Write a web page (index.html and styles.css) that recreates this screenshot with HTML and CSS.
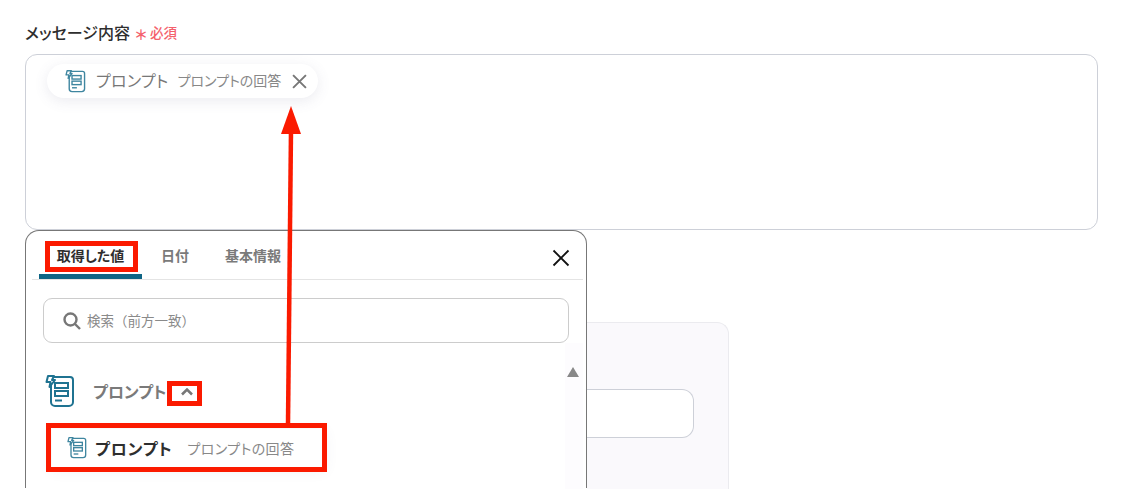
FILE: index.html
```html
<!DOCTYPE html>
<html lang="ja">
<head>
    <meta charset="UTF-8">
    <title>メッセージ内容</title>
    <link rel="stylesheet" href="styles.css">
</head>
<body>
    <svg class="icon-defs" width="0" height="0">
        <symbol id="prompt-icon" viewBox="0 0 30 33">
            <path d="M6 5 V27 a4 4 0 0 0 4 4 H24 a4 4 0 0 0 4-4 V5 a3 3 0 0 0-3-3 H7" fill="none" stroke-width="2"/>
            <rect x="10" y="8" width="13" height="5" fill="none" stroke-width="2"/>
            <rect x="10" y="16" width="13" height="5" fill="none" stroke-width="2"/>
            <path d="M10 25.5 H17" fill="none" stroke-width="2"/>
            <path d="M3 1 H9 L7 5 H10 L4.500 12 L5.500 7 H1.500 Z" fill="#fff" stroke-width="2" stroke-linejoin="round"/>
        </symbol>
    </svg>

    <div class="page">
        <div class="field-label">
            <span>メッセージ内容</span>
            <span class="required"><span class="asterisk">＊</span>必須</span>
        </div>

        <div class="message-box">
            <div class="chip">
                <svg class="chip-icon"><use href="#prompt-icon"/></svg>
                <span class="chip-name">プロンプト</span>
                <span class="chip-sub">プロンプトの回答</span>
                <svg class="chip-close" viewBox="0 0 14 14"><path d="M1 1 L13 13 M13 1 L1 13"/></svg>
            </div>
        </div>

        <div class="lower">
            <div class="panel">
                <div class="tabs">
                    <div class="tab active">取得した値</div>
                    <div class="tab tab-date">日付</div>
                    <div class="tab">基本情報</div>
                    <svg class="panel-close" viewBox="0 0 18 18"><path d="M1.5 1.5 L16.5 16.5 M16.5 1.5 L1.5 16.5"/></svg>
                </div>

                <div class="search">
                    <svg class="search-icon" viewBox="0 0 18 18"><circle cx="7.5" cy="7.5" r="6"/><path d="M12 12 L17 17"/></svg>
                    <span class="search-text">検索（前方一致）</span>
                </div>

                <div class="list-wrap">
                    <div class="list">
                        <div class="group-row">
                            <svg class="group-icon"><use href="#prompt-icon"/></svg>
                            <span class="group-name">プロンプト</span>
                            <svg class="chevron" viewBox="0 0 12 8"><path d="M1 6.5 L6 1.5 L11 6.5"/></svg>
                        </div>
                        <div class="item-row">
                            <svg class="item-icon"><use href="#prompt-icon"/></svg>
                            <span class="item-name">プロンプト</span>
                            <span class="item-sub">プロンプトの回答</span>
                        </div>
                    </div>
                    <div class="scrollbar">
                        <div class="scroll-up"></div>
                    </div>
                </div>
            </div>

            <div class="back-card">
                <div class="back-input"></div>
            </div>
        </div>
    </div>

    <!-- red annotations drawn over the screenshot -->
    <svg class="annotations" width="1128" height="489" viewBox="0 0 1128 489">
        <rect x="47.500" y="243.500" width="88" height="26" fill="none" stroke="#fb1a00" stroke-width="5"/>
        <rect x="169.500" y="383.500" width="30" height="20" fill="none" stroke="#fb1a00" stroke-width="5"/>
        <rect x="48.500" y="425.500" width="276" height="44" fill="none" stroke="#fb1a00" stroke-width="5"/>
        <path d="M288 424 L291 130" fill="none" stroke="#fb1a00" stroke-width="4.500"/>
        <path d="M291 106 L301 134 H281 Z" fill="#fb1a00"/>
    </svg>
</body>
</html>
```

FILE: styles.css
```css
* {
    box-sizing: border-box;
}
html, body {
    height: 489px;
    overflow: hidden;
}
body {
    margin: 0;
    background: #fff;
    font-family: "Noto Sans CJK JP", "Noto Sans", sans-serif;
    font-feature-settings: "palt";
    color: #333;
}
.icon-defs {
    display: block;
    height: 0;
}
.page {
    padding: 21px 30px 0 25px;
}
.field-label {
    display: flex;
    align-items: center;
    height: 22px;
    font-size: 16px;
    font-weight: 500;
    color: #2e2e2e;
}
.required {
    display: flex;
    align-items: center;
    margin-left: 4px;
    font-size: 13.500px;
    font-weight: 500;
    color: #f4606c;
}
.asterisk {
    width: 16px;
    font-size: 14px;
    line-height: 22px;
    padding-top: 3px;
    font-weight: 700;
    font-feature-settings: normal;
}
.message-box {
    height: 176px;
    margin-top: 11px;
    padding: 9px 21px;
    border: 1px solid #cdd0d8;
    border-radius: 12px;
    background: #fff;
}
.chip {
    display: flex;
    align-items: center;
    width: 271px;
    height: 34px;
    padding-left: 18px;
    border-radius: 17px;
    background: #fff;
    box-shadow: 0 3px 14px rgba(90, 90, 130, 0.12);
}
.chip-icon {
    width: 21px;
    height: 23px;
    stroke: #3f86a0;
}
.chip-name {
    margin-left: 10px;
    padding-bottom: 2px;
    font-size: 16px;
    letter-spacing: 0.300px;
    color: #777;
}
.chip-sub {
    margin-left: 9px;
    padding-bottom: 2px;
    font-size: 14px;
    color: #888;
}
.chip-close {
    width: 15px;
    height: 15px;
    margin-left: 11px;
    fill: none;
    stroke: #777;
    stroke-width: 1.8;
}
.lower {
    display: flex;
    align-items: flex-start;
}
.panel {
    flex: none;
    width: 562px;
    height: 258px;
    border: 1px solid #777;
    border-bottom: none;
    border-radius: 14px 14px 0 0;
    background: #fff;
}
.tabs {
    display: flex;
    align-items: flex-start;
    height: 49px;
    margin: 0 3px 0 6px;
    padding-left: 7px;
    border-bottom: 1px solid #e4e4e4;
}
.tab {
    height: 48px;
    margin-right: 37px;
    padding-top: 13px;
    font-size: 14px;
    font-weight: 700;
    line-height: 22px;
    color: #7a7a7a;
}
.tab-date {
    margin-right: 36px;
}
.tab.active {
    width: 103px;
    margin-right: 19px;
    border-bottom: 5px solid #0f6585;
    border-radius: 5px 5px 0 0;
    text-align: center;
    color: #2e2e2e;
}
.panel-close {
    width: 18px;
    height: 18px;
    margin: 18px 13px 0 auto;
    fill: none;
    stroke: #111;
    stroke-width: 1.8;
}
.search {
    display: flex;
    align-items: center;
    height: 45px;
    margin: 18px 17px 0 17px;
    padding-left: 19px;
    border: 1px solid #ccc;
    border-radius: 9px;
    color: #8a8a8a;
}
.search-icon {
    width: 18px;
    height: 18px;
    margin-right: 6px;
    fill: none;
    stroke: #777;
    stroke-width: 2.400;
}
.search-text {
    padding-bottom: 2px;
    font-size: 13.500px;
    font-feature-settings: normal;
}
.list-wrap {
    display: flex;
    justify-content: space-between;
    height: 146px;
}
.list {
    flex: 1;
}
.group-row {
    display: flex;
    align-items: center;
    height: 33px;
    margin-top: 32px;
    padding-left: 19px;
}
.group-icon {
    width: 30px;
    height: 33px;
    stroke: #1f7391;
}
.group-name {
    margin-left: 18px;
    padding-bottom: 2px;
    font-size: 16px;
    font-weight: 700;
    color: #7a7a7a;
}
.chevron {
    width: 12px;
    height: 8px;
    margin-left: 15px;
    fill: none;
    stroke: #777;
    stroke-width: 2.500;
}
.item-row {
    display: flex;
    align-items: center;
    width: 272px;
    height: 38px;
    margin: 21px 0 0 26px;
    padding-left: 15px;
    background: #fff;
    box-shadow: 0 3px 14px rgba(90, 90, 130, 0.1);
}
.item-icon {
    width: 20px;
    height: 22px;
    stroke: #3f86a0;
}
.item-name {
    margin-left: 8px;
    font-size: 16px;
    font-weight: 700;
    letter-spacing: 0.800px;
    color: #2e2e2e;
}
.item-sub {
    margin-left: 15px;
    font-size: 14px;
    letter-spacing: 0.400px;
    color: #888;
}
.scrollbar {
    flex: none;
    width: 18px;
    margin: 0 3px 0 0;
    padding: 24px 0 0 2px;
    background: #fdfcfe;
}
.scroll-up {
    width: 0;
    height: 0;
    border-left: 6.500px solid transparent;
    border-right: 6.500px solid transparent;
    border-bottom: 10px solid #888;
}
.back-card {
    flex: none;
    width: 142px;
    height: 167px;
    margin-top: 92px;
    padding: 66px 34px 0 0;
    border: 1px solid #ebebef;
    border-left: none;
    border-bottom: none;
    border-radius: 0 12px 0 0;
    background: #faf9fc;
}
.back-input {
    height: 49px;
    border: 1px solid #cdd0d8;
    border-left: none;
    border-radius: 0 12px 12px 0;
    background: #fff;
}
.annotations {
    position: absolute;
    top: 0;
    left: 0;
}
```
